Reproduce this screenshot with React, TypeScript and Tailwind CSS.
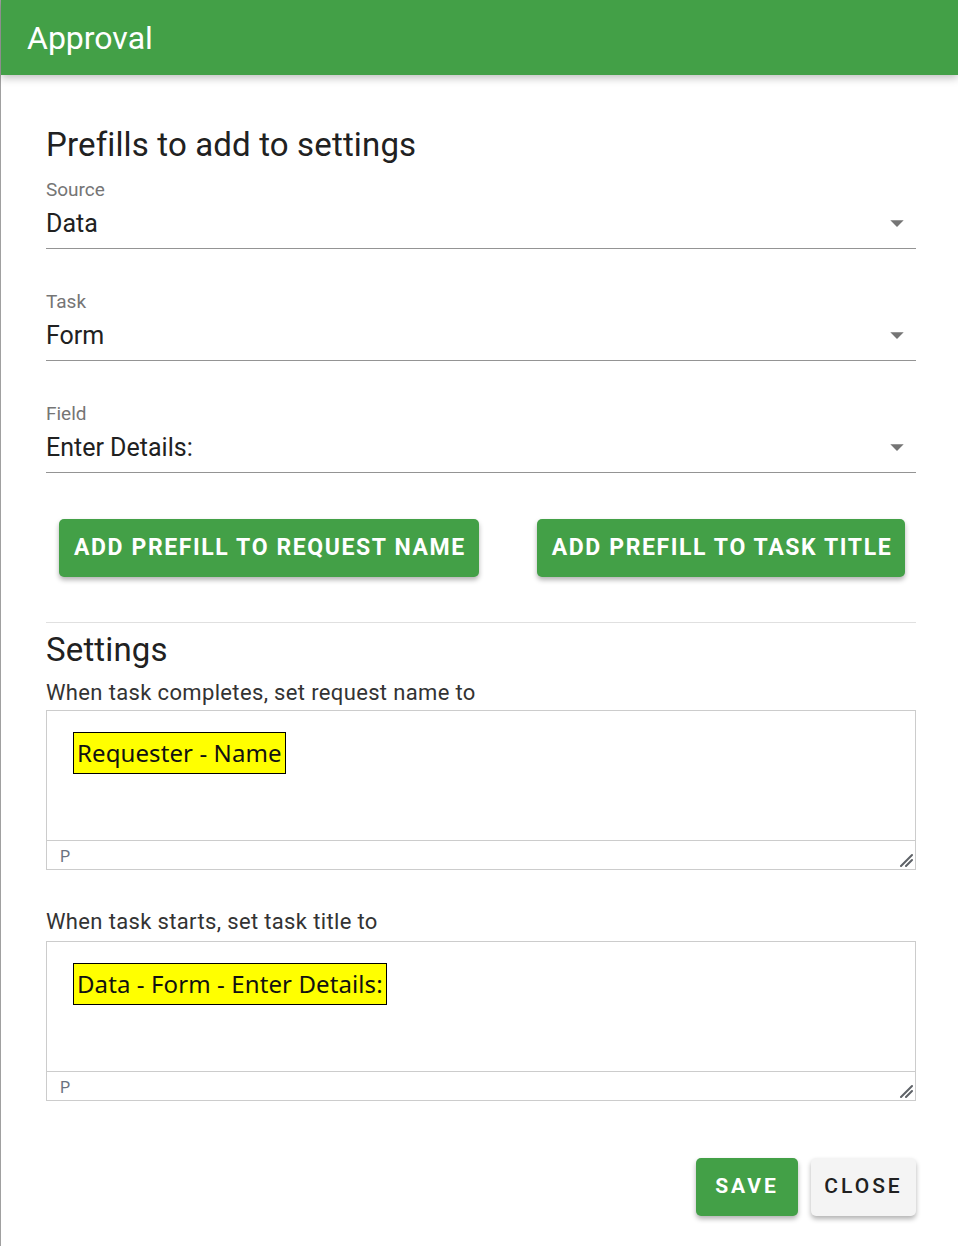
import React from "react";

const roboto = { fontFamily: "Roboto, 'Liberation Sans', Arial, sans-serif" };

function Arrow() {
  return (
    <svg viewBox="0 0 24 24" className="h-[32px] w-[32px] shrink-0" fill="#757575">
      <path d="M7 10l5 5 5-5z" />
    </svg>
  );
}

function SelectField({ label, value, first }: { label: string; value: string; first?: boolean }) {
  return (
    <div className={first ? "mt-[15px]" : "mt-[42px]"}>
      <div className="text-[19px] leading-[22px] text-[#757575]">{label}</div>
      <div className="flex h-[48px] items-start justify-between border-b border-[#949494] pt-[8px]">
        <span className="text-[25px] leading-[30px] text-[#212121]">{value}</span>
        <span className="mr-[3px] -mt-[2px] flex items-center">
          <Arrow />
        </span>
      </div>
    </div>
  );
}

function Editor({ text }: { text: string }) {
  return (
    <div className="border border-[#cccccc] bg-white">
      <div className="h-[129px] pl-[26px] pt-[21px]">
        <span
          className="inline-flex h-[42px] items-center border border-black bg-[#ffff00] px-[3px] text-[24px] tracking-[0.1px] text-[#111]"
          style={{ fontFamily: "'Noto Sans', 'Open Sans', sans-serif" }}
        >
          {text}
        </span>
      </div>
      <div className="relative flex h-[29px] items-center border-t border-[#cccccc] pl-[13px] pt-[3px] text-[16px] text-[#6b7280]">
        P
        <svg className="absolute bottom-[2px] right-[2px] h-[14px] w-[14px]" viewBox="0 0 14 14">
          <path d="M2 13 L13 2 M7 13 L13 7" stroke="#5f6368" strokeWidth="2" strokeLinecap="round" fill="none" />
        </svg>
      </div>
    </div>
  );
}

export default function App() {
  return (
    <div className="min-h-[1246px] w-[958px] border-l border-[#a0a0a0] bg-white" style={roboto}>
      <div className="relative z-10 flex h-[75px] items-center bg-[#43a047] pl-[26px] shadow-[0_3px_8px_rgba(0,0,0,0.25)]">
        <span className="text-[32px] leading-none text-white">Approval</span>
      </div>
      <div className="pl-[45px] pr-[42px] pt-[51px]">
        <h2 className="text-[33px] leading-[38px] tracking-[0.15px] text-[#212121]">Prefills to add to settings</h2>
        <SelectField label="Source" value="Data" first />
        <SelectField label="Task" value="Form" />
        <SelectField label="Field" value="Enter Details:" />

        <div className="mt-[46px] flex gap-[58px] pl-[13px]">
          <button className="h-[58px] rounded-[5px] bg-[#43a047] pl-[15px] pr-[13px] text-[23px] font-bold tracking-[1.6px] text-white shadow-[0_3px_5px_rgba(0,0,0,0.3)]">
            ADD PREFILL TO REQUEST NAME
          </button>
          <button className="h-[58px] rounded-[5px] bg-[#43a047] pl-[15px] pr-[13px] text-[23px] font-bold tracking-[1.6px] text-white shadow-[0_3px_5px_rgba(0,0,0,0.3)]">
            ADD PREFILL TO TASK TITLE
          </button>
        </div>

        <div className="mt-[45px] h-px bg-[#e0e0e0]" />
        <h2 className="mt-[8px] text-[33px] leading-[38px] tracking-[0.15px] text-[#212121]">Settings</h2>
        <div className="mt-[9px] text-[22px] leading-[30px] tracking-[0.35px] text-[#333333]">When task completes, set request name to</div>
        <div className="mt-[2px]">
          <Editor text="Requester - Name" />
        </div>
        <div className="mt-[37px] text-[22px] leading-[30px] tracking-[0.35px] text-[#333333]">When task starts, set task title to</div>
        <div className="mt-[4px]">
          <Editor text="Data - Form - Enter Details:" />
        </div>

        <div className="mt-[57px] flex justify-end gap-[13px]">
          <button className="h-[58px] w-[102px] rounded-[5px] bg-[#43a047] text-[21px] font-bold tracking-[3px] text-white shadow-[0_3px_5px_rgba(0,0,0,0.3)]">
            SAVE
          </button>
          <button className="h-[58px] w-[105px] rounded-[5px] bg-[#f4f4f4] text-[21px] font-medium tracking-[3px] text-[#212121] shadow-[0_3px_5px_rgba(0,0,0,0.3)]">
            CLOSE
          </button>
        </div>
      </div>
    </div>
  );
}
